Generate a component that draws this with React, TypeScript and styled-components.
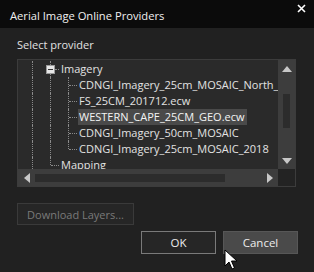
import React from 'react';
import styled, { createGlobalStyle } from 'styled-components';

const GlobalStyle = createGlobalStyle`
  html, body {
    margin: 0;
    padding: 0;
    background: #212121;
  }
  body {
    font-family: "Open Sans", "Noto Sans", sans-serif;
    font-size: 11px;
    color: #e2e2e2;
  }
`;

const Dialog = styled.div`
  position: relative;
  width: 314px;
  height: 272px;
  overflow: hidden;
  background: #212121;
  display: flex;
  flex-direction: column;
`;

const TitleBar = styled.div`
  height: 28px;
  background: #0b0b0b;
  display: flex;
  align-items: center;
  justify-content: space-between;
  padding: 0 10px;
  box-sizing: border-box;
`;

const Title = styled.span`
  font-size: 11.2px;
  color: #f0f0f0;
  margin-top: 3px;
`;

const Close = styled.span`
  display: flex;
  margin-top: -12px;
  margin-right: -2px;
`;

const Body = styled.div`
  flex: 1;
  padding: 8px 17px 0 17px;
  display: flex;
  flex-direction: column;
`;

const Label = styled.div`
  height: 23px;
  line-height: 18px;
`;

const Panel = styled.div`
  width: 279px;
  height: 128px;
  border: 1px solid #3c3c3c;
  box-sizing: border-box;
  display: grid;
  grid-template-columns: 1fr 17px;
  grid-template-rows: 1fr 17px;
  background: #2a2a2a;
`;

const TreeArea = styled.div`
  overflow: hidden;
  padding-top: 1px;
`;

const Row = styled.div`
  display: flex;
  height: 16px;
  align-items: stretch;
  white-space: nowrap;
`;

const Lead = styled.div`
  width: 5px;
  flex: none;
`;

const Guide = styled.div<{ $end?: boolean; $stub?: number }>`
  position: relative;
  width: 18px;
  flex: none;
  &::before {
    content: '';
    position: absolute;
    left: 9px;
    top: 0;
    bottom: ${(p) => (p.$end ? '8px' : '0')};
    border-left: 1px dotted #8a8a8a;
  }
  &::after {
    content: '';
    display: ${(p) => (p.$stub ? 'block' : 'none')};
    position: absolute;
    left: 10px;
    top: 8px;
    width: ${(p) => p.$stub ?? 0}px;
    border-top: 1px dotted #8a8a8a;
  }
`;

const Expander = styled.div`
  position: relative;
  width: 18px;
  flex: none;
  &::before {
    content: '';
    position: absolute;
    left: 9px;
    top: 0;
    bottom: 0;
    border-left: 1px dotted #8a8a8a;
  }
  &::after {
    content: '';
    position: absolute;
    left: 14px;
    top: 8px;
    width: 4px;
    border-top: 1px dotted #8a8a8a;
  }
`;

const Box = styled.div`
  position: absolute;
  left: 5px;
  top: 4px;
  width: 9px;
  height: 9px;
  box-sizing: border-box;
  background: #e6e6e6;
  border: 1px solid #9a9a9a;
  z-index: 1;
  display: flex;
  align-items: center;
  justify-content: center;
  &::before {
    content: '';
    width: 5px;
    height: 1px;
    background: #333;
  }
`;

const Text = styled.span<{ $selected?: boolean }>`
  margin-left: 1px;
  padding: 0 2px 0 1px;
  line-height: 16px;
  background: ${(p) => (p.$selected ? '#4a4a4a' : 'transparent')};
  color: ${(p) => (p.$selected ? '#f4f4f4' : '#e2e2e2')};
`;

const VScroll = styled.div`
  background: #3d3d3d;
  display: flex;
  flex-direction: column;
  align-items: center;
`;

const HScroll = styled.div`
  background: #3d3d3d;
  display: flex;
  align-items: center;
`;

const Arrow = styled.div`
  width: 17px;
  height: 17px;
  flex: none;
  display: flex;
  align-items: center;
  justify-content: center;
`;

const VTrack = styled.div`
  flex: 1;
  width: 7px;
  padding: 17px 0 24px;
  display: flex;
`;

const VThumb = styled.div`
  flex: 1;
  background: #2c2c2c;
`;

const HTrack = styled.div`
  flex: 1;
  height: 8px;
  display: flex;
  padding-right: 36px;
`;

const HThumb = styled.div`
  flex: 1;
  background: #2c2c2c;
`;

const Corner = styled.div`
  background: #232323;
`;

const SecondaryButton = styled.button`
  margin-top: 16px;
  width: 117px;
  height: 22px;
  box-sizing: border-box;
  border: 1px solid #3a3a3a;
  background: #262626;
  color: #7a7a7a;
  font-family: inherit;
  font-size: 11px;
  padding: 0;
  text-align: center;
`;

const Footer = styled.div`
  display: flex;
  justify-content: flex-end;
  gap: 7px;
  margin-top: 6px;
  margin-right: -1px;
`;

const DialogButton = styled.button<{ $hover?: boolean }>`
  width: 75px;
  height: 23px;
  box-sizing: border-box;
  border: 1px solid ${(p) => (p.$hover ? '#575757' : '#7a7a7a')};
  background: ${(p) => (p.$hover ? '#4a4a4a' : '#262626')};
  color: #ececec;
  font-family: inherit;
  font-size: 11.5px;
  padding: 0;
`;

const Cursor = styled.svg`
  position: absolute;
  left: 224px;
  top: 249px;
`;

const Tri = ({ dir }: { dir: 'up' | 'down' | 'left' | 'right' }) => {
  const pts = {
    up: '0,6 5,0 10,6',
    down: '0,0 10,0 5,6',
    left: '6,0 6,10 0,5',
    right: '0,0 0,10 6,5',
  }[dir];
  const w = dir === 'up' || dir === 'down' ? 10 : 6;
  const h = dir === 'up' || dir === 'down' ? 6 : 10;
  return (
    <svg width={w} height={h}>
      <polygon points={pts} fill="#c8c8c8" />
    </svg>
  );
};

const children = [
  'CDNGI_Imagery_25cm_MOSAIC_North_West',
  'FS_25CM_201712.ecw',
  'WESTERN_CAPE_25CM_GEO.ecw',
  'CDNGI_Imagery_50cm_MOSAIC',
  'CDNGI_Imagery_25cm_MOSAIC_2018',
];

export default function App() {
  return (
    <>
      <GlobalStyle />
      <Dialog>
        <TitleBar>
          <Title>Aerial Image Online Providers</Title>
          <Close>
            <svg width="9" height="9" viewBox="0 0 9 9">
              <path d="M1 1 L8 8 M8 1 L1 8" stroke="#ffffff" strokeWidth="1.6" />
            </svg>
          </Close>
        </TitleBar>
        <Body>
          <Label>Select provider</Label>
          <Panel>
            <TreeArea>
              <Row>
                <Lead />
                <Guide />
                <Expander>
                  <Box />
                </Expander>
                <Text>Imagery</Text>
              </Row>
              {children.map((c, i) => (
                <Row key={c}>
                  <Lead />
                  <Guide />
                  <Guide />
                  <Guide $end={i === children.length - 1} $stub={8} />
                  <Text $selected={i === 2}>{c}</Text>
                </Row>
              ))}
              <Row>
                <Lead />
                <Guide />
                <Guide $end $stub={8} />
                <Text>Mapping</Text>
              </Row>
            </TreeArea>
            <VScroll>
              <Arrow>
                <Tri dir="up" />
              </Arrow>
              <VTrack>
                <VThumb />
              </VTrack>
              <Arrow>
                <Tri dir="down" />
              </Arrow>
            </VScroll>
            <HScroll>
              <Arrow>
                <Tri dir="left" />
              </Arrow>
              <HTrack>
                <HThumb />
              </HTrack>
              <Arrow>
                <Tri dir="right" />
              </Arrow>
            </HScroll>
            <Corner />
          </Panel>
          <SecondaryButton disabled>Download Layers...</SecondaryButton>
          <Footer>
            <DialogButton>OK</DialogButton>
            <DialogButton $hover>Cancel</DialogButton>
          </Footer>
        </Body>
        <Cursor width="14" height="22" viewBox="0 0 14 22">
          <path
            d="M1 1 L1 17 L5 13 L8 20 L10.5 19 L7.5 12 L13 12 Z"
            fill="#ffffff"
            stroke="#000000"
            strokeWidth="1"
            strokeLinejoin="round"
          />
        </Cursor>
      </Dialog>
    </>
  );
}
